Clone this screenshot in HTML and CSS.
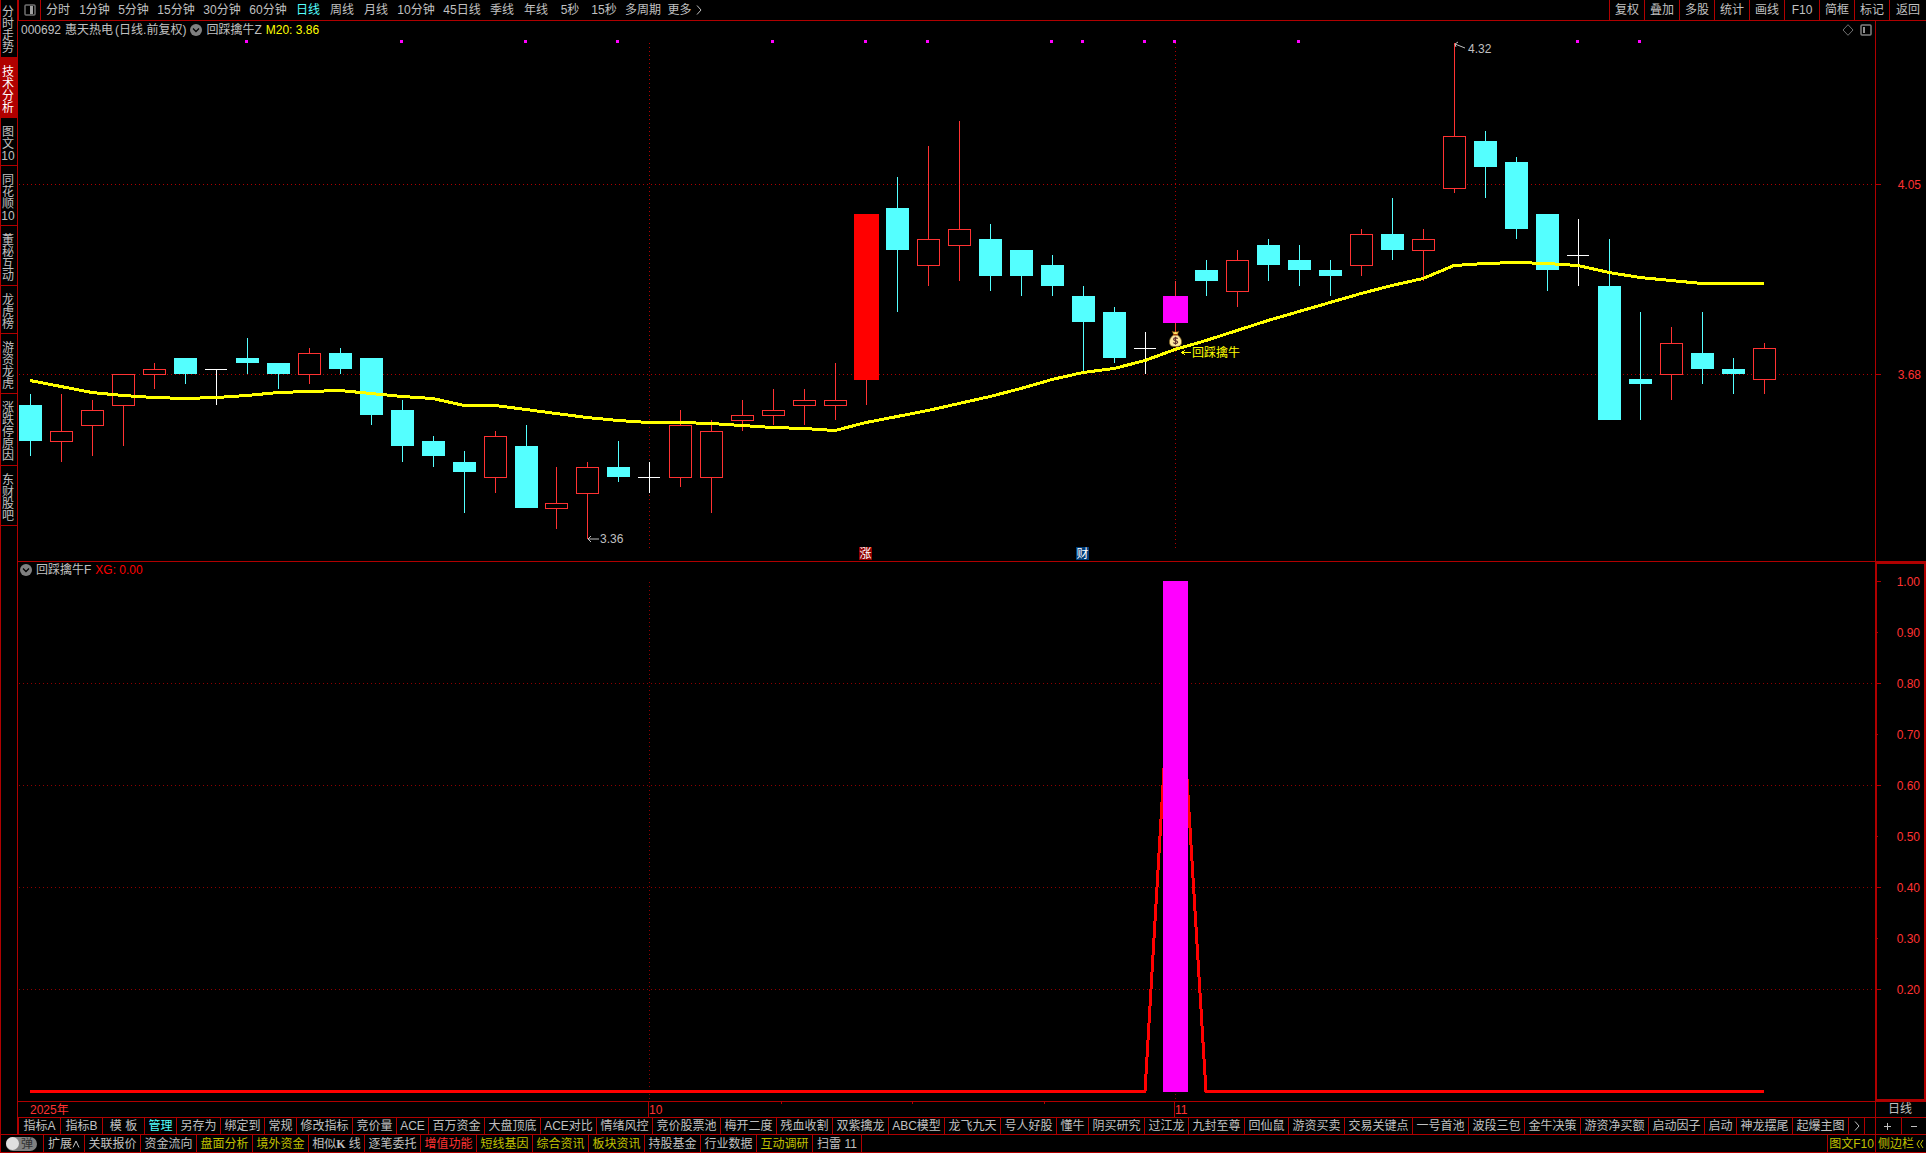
FILE: index.html
```html
<!DOCTYPE html>
<html lang="zh-CN">
<head>
<meta charset="utf-8">
<title>惠天热电 000692</title>
<link rel="stylesheet" href="styles.css">
</head>
<body>
<div class="workspace">
  <nav class="side" aria-label="功能">
    <button class="side-tab side-first">分时走势</button>
    <button class="side-tab side-active">技术分析</button>
    <button class="side-tab">图文10</button>
    <button class="side-tab">同花顺10</button>
    <button class="side-tab">董秘互动</button>
    <button class="side-tab">龙虎榜</button>
    <button class="side-tab">游资龙虎</button>
    <button class="side-tab">涨跌停原因</button>
    <button class="side-tab">东财股吧</button>
  </nav>
  <main class="main">
    <header class="toolbar">
      <button class="layout-btn" aria-label="布局">
        <svg width="12" height="12" viewBox="0 0 12 12"><rect x="1" y="1" width="10" height="10" rx="1" fill="none" stroke="#707070" stroke-width="1.5"/><rect x="6" y="2" width="3" height="8" fill="#a0a0a0"/></svg>
      </button>
      <div class="periods">
        <button class="period">分时</button>
        <button class="period p-md">1分钟</button>
        <button class="period p-md">5分钟</button>
        <button class="period p-lg">15分钟</button>
        <button class="period p-lg">30分钟</button>
        <button class="period p-lg">60分钟</button>
        <button class="period p-on">日线</button>
        <button class="period">周线</button>
        <button class="period">月线</button>
        <button class="period p-lg">10分钟</button>
        <button class="period p-lg">45日线</button>
        <button class="period">季线</button>
        <button class="period">年线</button>
        <button class="period">5秒</button>
        <button class="period">15秒</button>
        <button class="period p-xl">多周期</button>
        <button class="period p-md">更多<svg class="more" width="6" height="10" viewBox="0 0 6 10"><path d="M1 0.5L5 5L1 9.5" fill="none" stroke="#c0c0c0"/></svg></button>
      </div>
      <div class="tools">
        <button class="tool">复权</button>
        <button class="tool">叠加</button>
        <button class="tool">多股</button>
        <button class="tool">统计</button>
        <button class="tool">画线</button>
        <button class="tool">F10</button>
        <button class="tool">简框</button>
        <button class="tool">标记</button>
        <button class="tool tool-last">返回</button>
      </div>
    </header>

    <section class="panel panel-price">
      <div class="plot-col">
        <div class="caption">
          <span>000692</span><span class="name">惠天热电</span><span class="mode">(日线.前复权)</span>
          <svg class="drop" width="12" height="12" viewBox="0 0 12 12"><circle cx="6" cy="6" r="6" fill="#808080"/><path d="M3 4.5L6 7.5L9 4.5" fill="none" stroke="#000" stroke-width="1.3"/></svg>
          <span>回踩擒牛Z</span><span class="ma">M20: 3.86</span>
          <span class="caption-icons">
            <svg width="12" height="12" viewBox="0 0 12 12"><path d="M6 0.7L11 6L6 11.3L1 6Z" fill="none" stroke="#707070"/></svg>
            <svg width="12" height="12" viewBox="0 0 12 12"><rect x="1" y="1" width="10" height="10" rx="1" fill="none" stroke="#808080" stroke-width="1.5"/><rect x="3" y="3" width="2" height="6" fill="#909090"/></svg>
          </span>
        </div>
        <svg class="plot" id="price"></svg>
      </div>
      <div class="axis axis-price"><svg class="plot" id="price-axis"></svg></div>
    </section>

    <section class="panel panel-signal">
      <div class="plot-col">
        <div class="caption caption-signal">
          <svg class="drop" width="12" height="12" viewBox="0 0 12 12"><circle cx="6" cy="6" r="6" fill="#808080"/><path d="M3 4.5L6 7.5L9 4.5" fill="none" stroke="#000" stroke-width="1.3"/></svg>
          <span>回踩擒牛F</span><span class="xg">XG: 0.00</span>
        </div>
        <svg class="plot" id="signal"></svg>
      </div>
      <div class="axis axis-signal"><svg class="plot" id="signal-axis"></svg></div>
    </section>

    <div class="dates">
      <svg class="plot" id="dates"></svg>
      <span class="date-period">日线</span>
    </div>

    <div class="tabs">
      <button class="tab t-sm">指标A</button>
      <button class="tab t-sm">指标B</button>
      <button class="tab t-sm">模 板</button>
      <button class="tab t-xs cyan">管理</button>
      <button class="tab t-md">另存为</button>
      <button class="tab t-md">绑定到</button>
      <button class="tab t-xs">常规</button>
      <button class="tab">修改指标</button>
      <button class="tab t-md">竞价量</button>
      <button class="tab t-xs">ACE</button>
      <button class="tab">百万资金</button>
      <button class="tab">大盘顶底</button>
      <button class="tab">ACE对比</button>
      <button class="tab">情绪风控</button>
      <button class="tab t-xl">竞价股票池</button>
      <button class="tab">梅开二度</button>
      <button class="tab">残血收割</button>
      <button class="tab">双紫擒龙</button>
      <button class="tab">ABC模型</button>
      <button class="tab">龙飞九天</button>
      <button class="tab">号人好股</button>
      <button class="tab t-xs">懂牛</button>
      <button class="tab">阴买研究</button>
      <button class="tab t-md">过江龙</button>
      <button class="tab">九封至尊</button>
      <button class="tab t-md">回仙鼠</button>
      <button class="tab">游资买卖</button>
      <button class="tab t-xl">交易关键点</button>
      <button class="tab">一号首池</button>
      <button class="tab">波段三包</button>
      <button class="tab">金牛决策</button>
      <button class="tab t-xl">游资净买额</button>
      <button class="tab">启动因子</button>
      <button class="tab t-xs">启动</button>
      <button class="tab">神龙摆尾</button>
      <button class="tab">起爆主图</button>
      <button class="tab t-next" aria-label="更多指标"><svg width="6" height="10" viewBox="0 0 6 10"><path d="M1 0.5L5 5L1 9.5" fill="none" stroke="#c0c0c0"/></svg></button>
      <div class="zoom">
        <button class="zoom-btn" aria-label="放大"><svg width="8" height="8" viewBox="0 0 8 8"><path d="M0 4.5H7M3.5 1V8" stroke="#c0c0c0"/></svg></button>
        <button class="zoom-btn" aria-label="缩小"><svg width="8" height="8" viewBox="0 0 8 8"><path d="M1 4.5H7" stroke="#c0c0c0"/></svg></button>
      </div>
    </div>
  </main>
</div>

<footer class="status">
  <div class="toggle-cell"><label class="toggle"><input type="checkbox"><span>弹</span></label></div>
  <button class="link l-sm">扩展<svg width="8" height="8" viewBox="0 0 8 8"><path d="M1 7.5L4 1L7 7.5" fill="none" stroke="#c0c0c0"/></svg></button>
  <button class="link">关联报价</button>
  <button class="link">资金流向</button>
  <button class="link yellow">盘面分析</button>
  <button class="link yellow">境外资金</button>
  <button class="link">相似<b class="serif">K</b> 线</button>
  <button class="link">逐笔委托</button>
  <button class="link red">增值功能</button>
  <button class="link yellow">短线基因</button>
  <button class="link yellow">综合资讯</button>
  <button class="link yellow">板块资讯</button>
  <button class="link">持股基金</button>
  <button class="link">行业数据</button>
  <button class="link yellow">互动调研</button>
  <button class="link l-md">扫雷 11</button>
  <div class="status-right">
    <button class="link l-f10 yellow">图文F10</button>
    <button class="link l-bar yellow">侧边栏<svg class="fold" width="8" height="10" viewBox="0 0 8 10"><path d="M3.500 1L1 5L3.500 9M7 1L4.500 5L7 9" fill="none" stroke="#c0c000"/></svg></button>
  </div>
</footer>
<script src="chart.js"></script>
</body>
</html>
```
FILE: styles.css
```css
:root {
  --line: #b00000;
  --text: #c0c0c0;
  --yellow: #c0c000;
  --axis-width: 51px;
}

* { box-sizing: border-box; }

body {
  margin: 0;
  min-height: 100vh;
  display: flex;
  flex-direction: column;
  background: #000;
  color: var(--text);
  font: 12px/12px "Liberation Sans", "Noto Sans CJK SC", sans-serif;
}

button {
  margin: 0;
  padding: 0;
  border: 0;
  background: none;
  color: inherit;
  font: inherit;
  white-space: nowrap;
}

svg { display: block; flex: none; }

.workspace { flex: 1; display: flex; min-height: 0; }

/* left tabs */
.side {
  flex: none;
  width: 18px;
  display: flex;
  flex-direction: column;
  border: solid var(--line);
  border-width: 0 1px;
}
.side-tab {
  padding: 8px 2px 3px 0;
  border-bottom: 1px solid var(--line);
  white-space: normal;
  text-align: center;
}
.side-first { padding-top: 6px; }
.side-active { background: var(--line); color: #fff; }

.main { flex: 1; min-width: 0; display: flex; flex-direction: column; }

/* top toolbar */
.toolbar {
  flex: none;
  height: 21px;
  display: flex;
  border-bottom: 1px solid var(--line);
}
.layout-btn {
  width: 23px;
  display: flex;
  align-items: center;
  justify-content: center;
  border: solid var(--line);
  border-width: 0 1px;
}
.periods { flex: 1; display: flex; min-width: 0; overflow: hidden; }
.period {
  flex: none;
  width: 34px;
  display: flex;
  align-items: center;
  justify-content: center;
}
.p-md { width: 39px; }
.p-lg { width: 46px; }
.p-xl { width: 44px; }
.p-on { color: #54ffff; }
.more { margin-left: 4px; }
.tools { flex: none; display: flex; }
.tool { width: 34px; border-left: 1px solid var(--line); flex: 1 0 35px; }
.tool-last { flex-basis: 37px; }

/* chart panels */
.panel { display: flex; min-height: 160px; }
.panel-price { flex: 1 1 2px; border-bottom: 1px solid var(--line); }
.panel-signal { flex: 1 1 0; }
.plot-col { flex: 1; min-width: 0; display: flex; flex-direction: column; }
.plot {
  flex: 1 1 0;
  width: 100%;
  min-width: 0;
  min-height: 0;
  overflow: visible;
}
.caption {
  flex: none;
  height: 18px;
  padding: 3px 3px 3px;
  display: flex;
  align-items: center;
}
.caption-signal { height: 16px; padding: 2px; }
.name { margin-left: 4px; }
.mode { margin-left: 2px; }
.caption .drop { margin: 0 4px; }
.caption-signal .drop { margin-left: 0; }
.ma { margin-left: 4px; color: #ff0; }
.xg { margin-left: 4px; color: #f00; }
.caption-icons { margin-left: auto; display: flex; gap: 6px; }

.axis { flex: none; width: var(--axis-width); display: flex; }
.axis-price { padding-top: 18px; border-left: 1px solid var(--line); }
.axis-signal { padding-top: 14px; border: 2px solid var(--line); }

/* date scale */
.dates { flex: none; height: 16px; display: flex; border-top: 1px solid var(--line); }
.date-period {
  flex: none;
  width: var(--axis-width);
  padding-top: 1px;
  padding-right: 2px;
  border-left: 1px solid var(--line);
  text-align: center;
}

/* indicator tabs */
.tabs {
  flex: none;
  height: 17px;
  display: flex;
  border: solid var(--line);
  border-width: 1px 0 0 1px;
  overflow: hidden;
}
.tab {
  flex: none;
  width: 56px;
  border-right: 1px solid var(--line);
  text-align: center;
}
.t-xs { width: 32px; }
.t-sm { width: 42px; }
.t-md { width: 44px; }
.t-xl { width: 68px; }
.t-next { width: 16px; display: flex; align-items: center; justify-content: center; }
.zoom {
  flex: none;
  width: var(--axis-width);
  margin-left: auto;
  display: flex;
  border-left: 1px solid var(--line);
}
.zoom-btn { flex: 1; display: flex; align-items: center; justify-content: center; }
.zoom-btn + .zoom-btn { border-left: 1px solid var(--line); }

.cyan { color: #54ffff; }
.yellow { color: var(--yellow); }
.red { color: #ff3232; }

/* bottom bar */
.status {
  flex: none;
  height: 19px;
  display: flex;
  border: solid var(--line);
  border-width: 1px 0;
  overflow: hidden;
}
.toggle-cell {
  flex: none;
  width: 44px;
  padding-left: 5px;
  display: flex;
  align-items: center;
  border: solid var(--line);
  border-width: 0 1px;
}
.toggle {
  width: 31px;
  height: 14px;
  padding-right: 4px;
  display: flex;
  align-items: center;
  justify-content: space-between;
  border-radius: 7px;
  background: #808080;
  color: #303030;
}
.toggle input {
  appearance: none;
  width: 13px;
  height: 13px;
  margin: 0;
  border-radius: 50%;
  background: #e0e0e0;
}
.link {
  flex: none;
  width: 56px;
  display: flex;
  align-items: center;
  justify-content: center;
  border-right: 1px solid var(--line);
  white-space: pre;
}
.l-sm { width: 41px; }
.l-md { width: 49px; }
.serif { font-family: "Liberation Serif", serif; }
.status-right { flex: none; margin-left: auto; display: flex; border-left: 1px solid var(--line); }
.l-f10 { width: 48px; }
.l-bar { width: 50px; border-right: 0; }
.fold { margin-left: 2px; }

/* drawing */
.plot text { font: 12px "Liberation Sans", "Noto Sans CJK SC", sans-serif; fill: #ff3232; }
.plot .note { fill: var(--text); }
.plot .hint { fill: #ff0; }
.plot .badge { fill: #fff; text-anchor: middle; }
.plot .tick-label { text-anchor: end; }
.crisp { shape-rendering: crispEdges; }
```
FILE: chart.js
```js
// kind: r rise (hollow), f fall, w flat, u limit-up, s signal
// [kind, high, body top, body bottom, low, 20-day average]
const bars = [
  ['f',3.64,3.62,3.55,3.52,3.668],['r',3.64,3.57,3.55,3.51,3.657],['r',3.63,3.61,3.58,3.52,3.645],
  ['r',3.68,3.68,3.62,3.54,3.639],['r',3.70,3.69,3.68,3.65,3.635],['f',3.71,3.71,3.68,3.66,3.632],
  ['w',3.69,3.69,3.69,3.62,3.635],['f',3.75,3.71,3.70,3.68,3.639],['f',3.70,3.70,3.68,3.65,3.644],
  ['r',3.73,3.72,3.68,3.66,3.647],['f',3.73,3.72,3.69,3.68,3.649],['f',3.71,3.71,3.60,3.58,3.643],
  ['f',3.63,3.61,3.54,3.51,3.637],['f',3.56,3.55,3.52,3.50,3.632],['f',3.53,3.51,3.49,3.41,3.620],
  ['r',3.57,3.56,3.48,3.45,3.619],['f',3.58,3.54,3.42,3.42,3.611],['r',3.50,3.43,3.42,3.38,3.603],
  ['r',3.51,3.50,3.45,3.36,3.597],['f',3.55,3.50,3.48,3.47,3.591],['w',3.51,3.48,3.48,3.45,3.587],
  ['r',3.61,3.58,3.48,3.46,3.587],['r',3.59,3.57,3.48,3.41,3.584],['r',3.63,3.60,3.59,3.57,3.581],
  ['r',3.65,3.61,3.60,3.58,3.577],['r',3.65,3.63,3.62,3.58,3.575],['r',3.70,3.63,3.62,3.59,3.571],
  ['u',3.99,3.99,3.67,3.62,3.586],['f',4.06,4.00,3.92,3.80,3.599],['r',4.12,3.94,3.89,3.85,3.610],
  ['r',4.17,3.96,3.93,3.86,3.623],['f',3.97,3.94,3.87,3.84,3.637],['f',3.92,3.92,3.87,3.83,3.652],
  ['f',3.91,3.89,3.85,3.83,3.670],['f',3.85,3.83,3.78,3.68,3.683],['f',3.81,3.80,3.71,3.70,3.691],
  ['w',3.76,3.73,3.73,3.68,3.707],['s',3.86,3.83,3.78,3.76,3.728],['f',3.90,3.88,3.86,3.83,3.746],
  ['r',3.92,3.90,3.84,3.81,3.764],['f',3.94,3.93,3.89,3.86,3.784],['f',3.93,3.90,3.88,3.85,3.801],
  ['f',3.90,3.88,3.87,3.83,3.818],['r',3.96,3.95,3.89,3.87,3.836],['f',4.02,3.95,3.92,3.90,3.851],
  ['r',3.96,3.94,3.92,3.86,3.866],['r',4.32,4.14,4.04,4.03,3.891],['f',4.15,4.13,4.08,4.02,3.894],
  ['f',4.10,4.09,3.96,3.94,3.897],['f',3.99,3.99,3.88,3.84,3.895],['w',3.98,3.91,3.91,3.85,3.891],
  ['f',3.94,3.85,3.59,3.59,3.877],['f',3.80,3.67,3.66,3.59,3.868],['r',3.77,3.74,3.68,3.63,3.861],
  ['f',3.80,3.72,3.69,3.66,3.856],['f',3.71,3.69,3.68,3.64,3.856],['r',3.74,3.73,3.67,3.64,3.856]
];
const slots = 60;
const dots = [7,12,16,19,24,27,29,33,34,36,37,41,50,52];
const months = [[20,'10'],[37,'11']];
const signalBar = 37;
const RED = '#ff3232', CYAN = '#54ffff', LINE = '#b00000';

const byId = id => document.getElementById(id);
const rect = (x, y, w, h, fill, stroke) =>
  `<rect class="crisp" x="${x}" y="${y}" width="${w}" height="${h}" fill="${fill}"${stroke ? ` stroke="${stroke}"` : ''}/>`;
const path = (d, stroke, w, dash) =>
  `<path class="crisp" d="${d}" fill="none" stroke="${stroke}" stroke-width="${w}"${dash ? ` stroke-dasharray="${dash}"` : ''}/>`;
const text = (x, y, cls, s) => `<text class="${cls}" x="${x}" y="${y}">${s}</text>`;
const col = (i, w) => Math.floor(12.8 + i * w / slots);

function drawPrice() {
  const { width: w, height: h } = byId('price').getBoundingClientRect();
  const top = 4, bottom = h - 22;
  const y = p => Math.round(top + (4.32 - p) / 0.96 * (bottom - top));
  const grid = [[4.047, '4.05'], [3.68, '3.68']];
  let out = '', axis = '';
  for (const [p, label] of grid) {
    out += path(`M1 ${y(p) + 0.5}H${w}`, LINE, 1, '1 3');
    axis += path(`M0 ${y(p) + 0.5}H5`, LINE, 1) + text(45, y(p) + 5, 'tick-label', label);
  }
  for (const [i] of months) out += path(`M${col(i, w) + 0.5} 4V${h - 12}`, LINE, 1, '1 3');
  bars.forEach(([k, hi, a, b, lo], i) => {
    const x = col(i, w), ya = y(a), yb = y(b);
    const c = { r: RED, f: CYAN, w: '#fff', u: RED, s: RED }[k];
    out += rect(x, y(hi), 1, Math.max(1, y(lo) - y(hi)), c);
    if (k === 'r') out += rect(x - 10.5, ya + 0.5, 22, Math.max(1, yb - ya), '#000', RED);
    if (k === 'f') out += rect(x - 11, ya, 23, yb - ya, CYAN);
    if (k === 'w') out += rect(x - 11, ya, 22, 1, '#fff');
    if (k === 'u') out += rect(x - 12, ya, 25, yb - ya + 1, '#f00');
    if (k === 's') out += rect(x - 12, ya, 25, yb - ya + 1, '#f0f');
  });
  out += path('M' + bars.map((b, i) => `${col(i, w)} ${y(b[5]) + 0.5}`).join('L'), '#ff0', 3);
  for (const i of dots) out += rect(col(i, w) - 2, 1, 3, 3, '#f0f');

  const lx = col(18, w), ly = y(3.36);
  out += `<path d="M${lx + 1} ${ly}H${lx + 12}M${lx + 4} ${ly - 3}L${lx + 1} ${ly}L${lx + 4} ${ly + 3}" fill="none" stroke="#c0c0c0"/>`;
  out += text(lx + 13, ly + 4, 'note', '3.36');
  const hx = col(46, w), hy = y(4.32);
  out += `<path d="M${hx + 11} ${hy + 5}L${hx + 1} ${hy + 1}M${hx + 4} ${hy - 1}L${hx + 1} ${hy + 1}L${hx + 2} ${hy + 4}" fill="none" stroke="#c0c0c0"/>`;
  out += text(hx + 14, hy + 10, 'note', '4.32');

  const sx = col(signalBar, w), sy = y(3.76);
  out += `<g transform="translate(${sx - 6} ${sy - 1})">
    <path d="M3 0L5 1L6.500 0.500L8 1L10 0L8.500 3.500H4.500Z" fill="#ffe060" stroke="#703000" stroke-width="0.6"/>
    <path d="M4.500 4C1.500 6 0 9 0.500 12C1 15 3 15.500 6.500 15.500S12 15 12.500 12C13 9 11.500 6 8.500 4Z" fill="#ffe9a0" stroke="#806020" stroke-width="0.7"/>
    <path d="M4.300 3.800H8.700" stroke="#c04000"/>
    <path d="M8.600 7.800C8 6.600 4.700 6.500 4.600 8.200C4.500 10 8.800 9.200 8.700 11.300C8.500 13 5 12.900 4.300 11.500M6.500 5.800V13.800" fill="none" stroke="#603030" stroke-width="1.2"/></g>`;
  const ty = y(3.728) + 3;
  out += `<path class="crisp" d="M${sx + 7} ${ty + 0.5}H${sx + 16}M${sx + 10} ${ty - 2}L${sx + 7} ${ty + 0.5}L${sx + 10} ${ty + 3}" fill="none" stroke="#ff0"/>`;
  out += text(sx + 17, ty + 5, 'hint', '回踩擒牛');

  for (const [i, s, c] of [[27, '涨', '#900000'], [34, '财', '#003c78']]) {
    const x = col(i, w);
    out += rect(x - 7, h - 14, 13, 13, c) + text(x - 0.5, h - 3, 'badge', s);
  }
  byId('price').innerHTML = out;
  byId('price-axis').innerHTML = axis;
}

function drawSignal() {
  const { width: w, height: h } = byId('signal').getBoundingClientRect();
  const top = 3, base = h - 10;
  const y = v => Math.round(base - v * (base - top));
  let out = '', axis = '';
  for (let n = 10; n >= 2; n--) {
    const v = n / 10, major = n % 2 === 0;
    if (major && n < 10) out += path(`M1 ${y(v) + 0.5}H${w}`, '#900000', 1, '1 3');
    axis += path(`M0 ${y(v) + 0.5}H${major ? 4 : 1}`, LINE, 1) + text(43, y(v) + 5, 'tick-label', v.toFixed(2));
  }
  for (const [i] of months) out += path(`M${col(i, w) + 0.5} 4V${h - 2}`, '#900000', 1, '1 3');
  const s = signalBar, yb = y(0) + 0.5;
  out += path(`M${col(0, w)} ${yb}H${col(s - 1, w)}L${col(s, w)} ${y(1)}L${col(s + 1, w)} ${yb}H${col(bars.length - 1, w)}`, '#f00', 3);
  out += rect(col(s, w) - 12, y(1), 25, y(0) - y(1) + 1, '#f0f');
  byId('signal').innerHTML = out;
  byId('signal-axis').innerHTML = axis;
}

function drawDates() {
  const { width: w } = byId('dates').getBoundingClientRect();
  let out = text(12, 12, '', '2025年');
  for (const [i, s] of months) out += rect(col(i, w) - 1, 0, 1, 15, LINE) + text(col(i, w), 12, '', s);
  const a = col(20, w), b = col(37, w);
  for (const n of [1, 2, 3]) out += rect(Math.round(a + (b - a) * n / 4), 0, 1, 2, LINE);
  byId('dates').innerHTML = out;
}

function draw() { drawPrice(); drawSignal(); drawDates(); }
draw();
addEventListener('resize', draw);
```
